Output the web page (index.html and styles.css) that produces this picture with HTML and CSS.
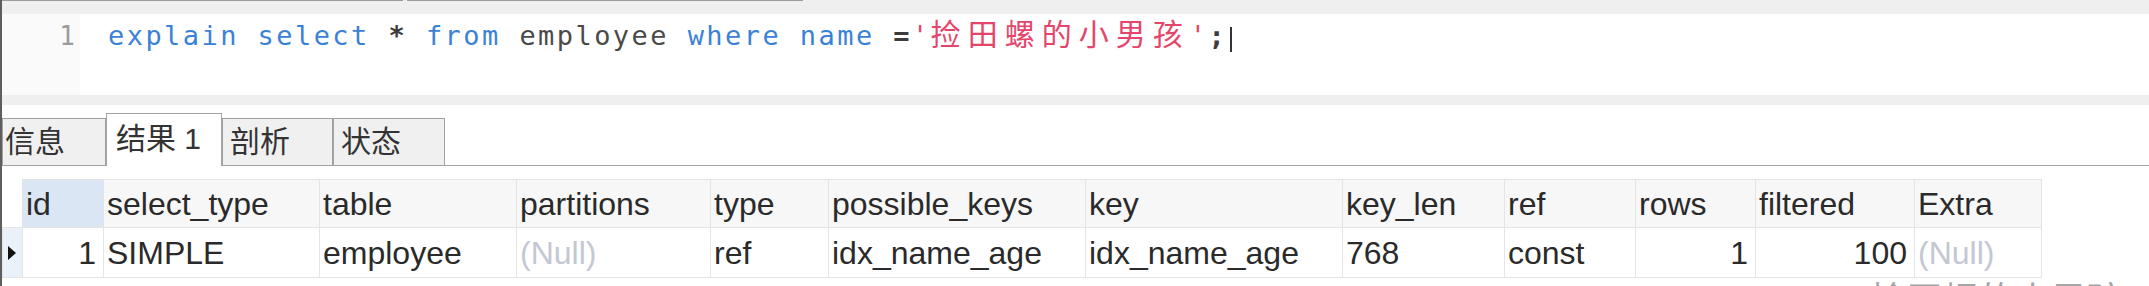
FILE: index.html
```html
<!DOCTYPE html>
<html lang="zh-CN">
<head>
<meta charset="utf-8">
<title>Query</title>
<link rel="stylesheet" href="styles.css">
</head>
<body>
<div class="window">
  <div class="topstrip">
    <div class="topline"><span class="seg seg1"></span><span class="seg seg2"></span></div>
  </div>
  <div class="editor">
    <div class="gutter"><span class="lineno">1</span></div>
    <div class="code"><span class="kw">explain</span> <span class="kw">select</span> <span class="op">*</span> <span class="kw">from</span> <span class="ident">employee</span> <span class="kw">where</span> <span class="kw">name</span> <span class="op">=</span><span class="str">'<span class="cjk">捡田螺的小男孩</span>'</span><span class="op">;</span><span class="caret"></span></div>
  </div>
  <div class="divider"></div>
  <div class="tabs">
    <div class="tab tab-info">信息</div>
    <div class="tab tab-result active">结果 1</div>
    <div class="tab tab-profile">剖析</div>
    <div class="tab tab-status">状态</div>
  </div>
  <table class="grid">
    <colgroup>
      <col class="c-ind"><col class="c-id"><col class="c-st"><col class="c-tbl"><col class="c-part"><col class="c-type"><col class="c-pk"><col class="c-key"><col class="c-kl"><col class="c-ref"><col class="c-rows"><col class="c-filt"><col class="c-extra">
    </colgroup>
    <thead>
      <tr>
        <th class="ind"></th>
        <th class="sel">id</th>
        <th>select_type</th>
        <th>table</th>
        <th>partitions</th>
        <th>type</th>
        <th>possible_keys</th>
        <th>key</th>
        <th>key_len</th>
        <th>ref</th>
        <th>rows</th>
        <th>filtered</th>
        <th>Extra</th>
      </tr>
    </thead>
    <tbody>
      <tr>
        <td class="ind"><svg class="arrow" width="10" height="16" viewBox="0 0 10 16"><polygon points="1,1 9,8 1,15" fill="#111"/></svg></td>
        <td class="num">1</td>
        <td>SIMPLE</td>
        <td>employee</td>
        <td class="null">(Null)</td>
        <td>ref</td>
        <td>idx_name_age</td>
        <td>idx_name_age</td>
        <td>768</td>
        <td>const</td>
        <td class="num">1</td>
        <td class="num">100</td>
        <td class="null">(Null)</td>
      </tr>
    </tbody>
  </table>
</div>
<div class="watermark">CSDN @捡田螺的小男孩</div>
</body>
</html>
```
FILE: styles.css
```css
* { box-sizing: border-box; }
html, body { margin: 0; padding: 0; background: #ffffff; }
body {
  width: 2149px;
  height: 286px;
  overflow: hidden;
  position: relative;
  font-family: "Liberation Sans", "Noto Sans CJK SC", sans-serif;
}
.window {
  border-left: 2px solid #5e5e5e;
  height: 286px;
}

/* top strip */
.topstrip { height: 14px; background: #efefef; }
.topline { display: flex; height: 1px; }
.seg { display: block; height: 1px; background: #9c9c9c; }
.seg1 { width: 401px; }
.seg2 { width: 396px; margin-left: 4px; }

/* editor */
.editor { display: flex; height: 81px; background: #ffffff; }
.gutter {
  width: 78px;
  background: #fafafa;
  text-align: right;
  padding: 7px 5px 0 0;
  font: 26px/30px "DejaVu Sans Mono", monospace;
  color: #9b9b9b;
}
.code {
  padding: 7px 0 0 28px;
  font: 27px/30px "DejaVu Sans Mono", monospace;
  letter-spacing: 2.44px;
  white-space: pre;
  color: #4a4a4a;
}
.kw { color: #3a82d8; }
.ident { color: #4a4a4a; }
.op { color: #3c3c3c; font-weight: bold; }
.str { color: #e6456b; }
.cjk {
  font-family: "Noto Sans CJK SC", sans-serif;
  font-size: 30px;
  line-height: 20px;
  letter-spacing: 7px;
}
.caret {
  display: inline-block;
  width: 2px;
  height: 25px;
  margin-left: 3px;
  background: #333333;
  vertical-align: -7px;
}

.divider { height: 10px; background: #efefef; }

/* tabs */
.tabs {
  display: flex;
  align-items: flex-end;
  height: 61px;
  border-bottom: 1px solid #a2a2a2;
}
.tab {
  height: 47px;
  border: 1px solid #a2a2a2;
  border-bottom: 0;
  background: #f0f0f0;
  padding-top: 6px;
  font-size: 30px;
  line-height: 34px;
  color: #333333;
  white-space: nowrap;
}
.tab.active {
  height: 53px;
  margin-bottom: -1px;
  background: #ffffff;
  padding-top: 8px;
}
.tab-info { width: 104px; padding-left: 2px; }
.tab-result { width: 116px; padding-left: 9px; }
.tab-profile { width: 111px; padding-left: 7px; }
.tab-status { width: 112px; padding-left: 7px; }

/* result grid */
.grid {
  border-collapse: collapse;
  table-layout: fixed;
  margin-top: 13px;
  font-size: 32px;
  line-height: 36px;
  color: #2a2a2a;
}
.grid th, .grid td {
  border: 1px solid #e4e4e4;
  padding: 1px 7px 0 3px;
  white-space: nowrap;
  overflow: hidden;
  text-align: left;
  font-weight: normal;
}
.grid thead th { height: 48px; background: #f7f7f7; }
.grid tbody td { height: 50px; background: #ffffff; }
.grid th.sel { background: #dbe6f4; }
.grid th.ind { background: #ffffff; border-top-color: #ffffff; border-left-color: #ffffff; }
.grid td.ind { background: #eaf1fa; padding: 0 0 0 4px; }
.grid td.num { text-align: right; }
.grid td.null { color: #c3c8d2; }
.arrow { display: block; }

.c-ind { width: 20px; }
.c-id { width: 81px; }
.c-st { width: 216px; }
.c-tbl { width: 197px; }
.c-part { width: 194px; }
.c-type { width: 118px; }
.c-pk { width: 257px; }
.c-key { width: 257px; }
.c-kl { width: 162px; }
.c-ref { width: 131px; }
.c-rows { width: 120px; }
.c-filt { width: 159px; }
.c-extra { width: 127px; }

.watermark {
  position: absolute;
  left: 1722px;
  top: 283px;
  font-size: 36px;
  line-height: 36px;
  color: #6a6a6a;
  opacity: 0.6;
  white-space: nowrap;
}
```
